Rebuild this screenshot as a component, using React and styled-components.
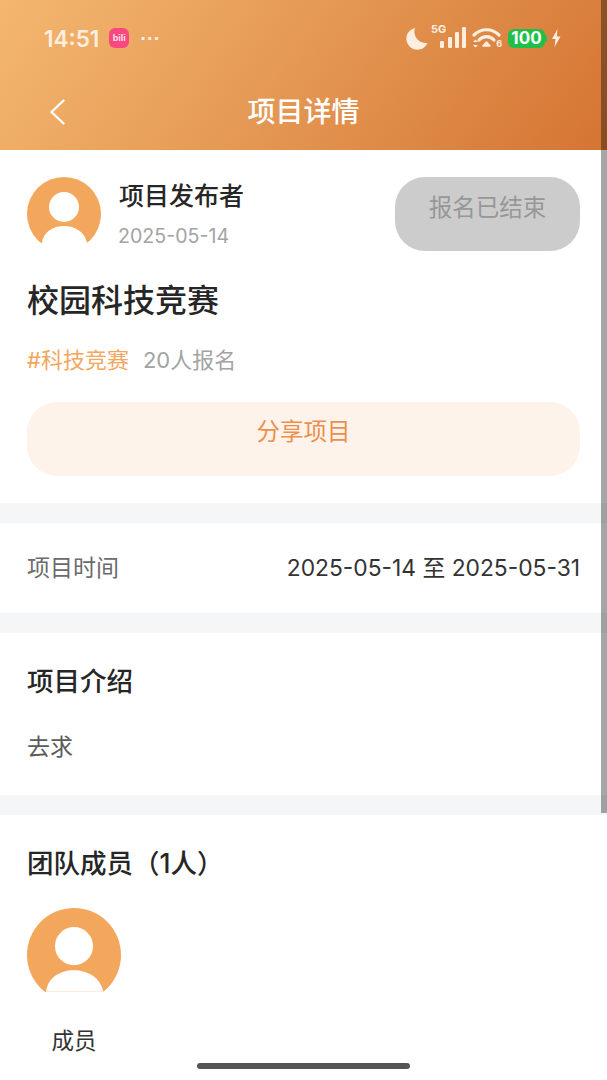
import React from 'react'
import styled, { createGlobalStyle } from 'styled-components'

const FONT = `"Inter", "Noto Sans CJK SC", "Noto Sans", sans-serif`

const GlobalStyle = createGlobalStyle`
  html, body { margin: 0; padding: 0; background: #fff; }
  body { font-family: ${FONT}; overflow: hidden; }
`

const Avatar = ({ size }) => (
  <AvatarSvg width={size} height={size} viewBox="0 0 74 74">
    <circle cx="37" cy="37" r="37" fill="#f3a75c" />
    <circle cx="37" cy="30" r="15" fill="#fff" />
    <path d="M15 66 C16 55 26 49 37 49 C48 49 58 55 60 66 Z" fill="#fff" />
    <rect x="0" y="66" width="74" height="8" fill="#fff" />
  </AvatarSvg>
)

const SignalIcon = () => (
  <svg width="27" height="21" viewBox="0 0 27 21">
    <rect x="1" y="14" width="4" height="7" rx="1" fill="#fdeee0" />
    <rect x="9" y="10" width="4" height="11" rx="1" fill="#fdeee0" />
    <rect x="16" y="5" width="4" height="16" rx="1" fill="#fdeee0" />
    <rect x="23" y="0" width="4" height="21" rx="1" fill="#fdeee0" />
  </svg>
)

const WifiIcon = () => (
  <WifiBox>
    <svg width="29" height="22" viewBox="0 0 29 22" fill="none" stroke="#fdeee0" strokeLinecap="round">
      <path d="M2 8 C9 1 20 1 27 8" strokeWidth="3.2" />
      <path d="M7 13 C11 8.5 18 8.5 22 13" strokeWidth="3.2" />
      <path d="M11 19 L14.5 15 L18 19 Z" fill="#fdeee0" strokeWidth="1.6" strokeLinejoin="round" />
      <path d="M1 15 L3.5 12.5 L6 15 Z M1 18 L3.5 20.5 L6 18 Z" fill="#fdeee0" stroke="none" />
    </svg>
    <WifiLabel>6</WifiLabel>
  </WifiBox>
)

const App = () => {
  return (
    <Page>
      <GlobalStyle />
      <Header>
        <StatusBar>
          <StatusLeft>
            <Clock>14:51</Clock>
            <AppBadge>bili</AppBadge>
            <Dots>···</Dots>
          </StatusLeft>
          <StatusRight>
            <svg width="22" height="23" viewBox="0 0 22 23">
              <path d="M9 1 A11 11 0 1 0 21.5 16 A11.5 11.5 0 0 1 9 1 Z" fill="#fdeee0" />
            </svg>
            <NetworkGroup>
              <NetworkLabel>5G</NetworkLabel>
              <SignalIcon />
            </NetworkGroup>
            <WifiIcon />
            <Battery>100</Battery>
            <BoltBox>
              <svg width="10" height="18" viewBox="0 0 10 18">
                <path d="M6.5 0 L1 10 L4.5 10 L3.5 18 L9.5 7.5 L5.8 7.5 Z" fill="#fdeee0" />
              </svg>
            </BoltBox>
          </StatusRight>
        </StatusBar>
        <NavBar>
          <BackButton>
            <svg width="16" height="26" viewBox="0 0 16 26" fill="none" stroke="#fff" strokeWidth="2.4" strokeLinecap="round" strokeLinejoin="round">
              <path d="M14.5 1.5 L2.5 13 L14.5 24.5" />
            </svg>
          </BackButton>
          <NavTitle>项目详情</NavTitle>
        </NavBar>
      </Header>

      <TopCard>
        <PublisherRow>
          <Avatar size={74} />
          <PublisherInfo>
            <PublisherName>项目发布者</PublisherName>
            <PublishDate>2025-05-14</PublishDate>
          </PublisherInfo>
          <ClosedButton>报名已结束</ClosedButton>
        </PublisherRow>
        <ProjectTitle>校园科技竞赛</ProjectTitle>
        <TagRow>
          <Tag>#科技竞赛</Tag>
          <Signups>20人报名</Signups>
        </TagRow>
        <ShareButton>分享项目</ShareButton>
      </TopCard>

      <TimeRow>
        <TimeLabel>项目时间</TimeLabel>
        <TimeValue>2025-05-14 至 2025-05-31</TimeValue>
      </TimeRow>

      <IntroSection>
        <SectionTitle>项目介绍</SectionTitle>
        <IntroText>去求</IntroText>
      </IntroSection>

      <TeamSection>
        <SectionTitle>团队成员（1人）</SectionTitle>
        <Member>
          <Avatar size={94} />
          <MemberName>成员</MemberName>
        </Member>
      </TeamSection>

      <ScrollThumb />
      <HomeIndicator />
    </Page>
  )
}

export default App

const Page = styled.div`
  position: relative;
  width: 607px;
  height: 1080px;
  overflow: hidden;
  background: #f5f6f7;
`

const Header = styled.div`
  height: 150px;
  display: flex;
  flex-direction: column;
  background: linear-gradient(125deg, #f4b76f 0%, #e59a55 45%, #d57433 100%);
`

const StatusBar = styled.div`
  height: 76px;
  display: flex;
  align-items: center;
  justify-content: space-between;
  padding: 0 46px 0 44px;
`

const StatusLeft = styled.div`
  display: flex;
  align-items: center;
`

const Clock = styled.span`
  font-size: 22.5px;
  font-weight: 600;
  color: #fdeee0;
`

const AppBadge = styled.span`
  width: 20px;
  height: 20px;
  margin-left: 10px;
  border-radius: 6px;
  background: #f9487f;
  color: #ffe3ec;
  font-family: "Liberation Sans", sans-serif;
  font-size: 9px;
  font-weight: 700;
  line-height: 20px;
  text-align: center;
`

const Dots = styled.span`
  margin-left: 11px;
  font-family: "Liberation Sans", sans-serif;
  font-size: 20px;
  line-height: 20px;
  font-weight: 700;
  color: #fdeee0;
`

const StatusRight = styled.div`
  display: flex;
  align-items: center;
`

const NetworkGroup = styled.div`
  position: relative;
  width: 36px;
  height: 22px;
  margin-left: 2px;
  display: flex;
  justify-content: flex-end;
`

const NetworkLabel = styled.span`
  position: absolute;
  left: 1px;
  top: -5px;
  font-size: 11px;
  font-weight: 700;
  color: #fdeee0;
`

const WifiBox = styled.div`
  position: relative;
  width: 30px;
  height: 22px;
  margin-left: 6px;
  display: flex;
`

const WifiLabel = styled.span`
  position: absolute;
  right: 0;
  bottom: 0;
  font-size: 9px;
  line-height: 10px;
  font-weight: 700;
  color: #fdeee0;
`

const Battery = styled.span`
  position: relative;
  width: 37px;
  height: 19px;
  margin-left: 6px;
  border-radius: 6px;
  background: #1fc04a;
  color: #fff;
  font-size: 17px;
  font-weight: 700;
  line-height: 19px;
  text-align: center;

  &::after {
    content: "";
    position: absolute;
    right: -2px;
    top: 6px;
    width: 2px;
    height: 7px;
    border-radius: 0 2px 2px 0;
    background: #1fc04a;
  }
`

const BoltBox = styled.div`
  margin-left: 6px;
  display: flex;
`

const NavBar = styled.div`
  position: relative;
  flex: 1;
  display: flex;
  align-items: center;
  justify-content: center;
  padding-bottom: 2px;
`

const BackButton = styled.div`
  position: absolute;
  left: 49px;
  top: 23px;
  display: flex;
`

const NavTitle = styled.div`
  font-size: 28px;
  font-weight: 500;
  line-height: 40px;
  color: #fff;
`

const TopCard = styled.div`
  height: 353px;
  box-sizing: border-box;
  padding: 27px 27px 0;
  background: #fff;
`

const PublisherRow = styled.div`
  display: flex;
  align-items: flex-start;
`

const AvatarSvg = styled.svg`
  display: block;
  flex-shrink: 0;
`

const PublisherInfo = styled.div`
  flex: 1;
  margin-left: 17px;
`

const PublisherName = styled.div`
  padding-left: 1px;
  font-size: 25px;
  font-weight: 500;
  line-height: 38px;
  color: #262626;
`

const PublishDate = styled.div`
  margin-top: 6px;
  font-size: 19.6px;
  line-height: 30px;
  color: #a3a3a3;
`

const ClosedButton = styled.div`
  width: 185px;
  height: 74px;
  box-sizing: border-box;
  padding-top: 12px;
  border-radius: 30px;
  background: #cccccc;
  color: #979797;
  font-size: 23.5px;
  line-height: 38px;
  text-align: center;
`

const ProjectTitle = styled.div`
  margin-top: 28px;
  font-size: 32px;
  font-weight: 500;
  line-height: 44px;
  color: #262626;
`

const TagRow = styled.div`
  display: flex;
  gap: 14px;
  margin-top: 20px;
  font-size: 22px;
  line-height: 34px;
`

const Tag = styled.span`
  color: #f3a75c;
`

const Signups = styled.span`
  color: #a3a3a3;
`

const ShareButton = styled.div`
  height: 74px;
  box-sizing: border-box;
  margin-top: 25px;
  padding-top: 11px;
  border-radius: 30px;
  background: #fef3ea;
  color: #ec8f4d;
  font-size: 23.5px;
  line-height: 38px;
  text-align: center;
`

const TimeRow = styled.div`
  height: 90px;
  box-sizing: border-box;
  margin-top: 20px;
  padding: 0 27px 4px;
  display: flex;
  align-items: center;
  justify-content: space-between;
  background: #fff;
  font-size: 23px;
`

const TimeLabel = styled.span`
  color: #6b6b6b;
`

const TimeValue = styled.span`
  color: #333;
  font-size: 22.8px;
`

const IntroSection = styled.div`
  height: 162px;
  box-sizing: border-box;
  margin-top: 20px;
  padding: 28px 27px 0;
  background: #fff;
`

const SectionTitle = styled.div`
  font-size: 26.5px;
  font-weight: 500;
  line-height: 40px;
  color: #262626;
`

const IntroText = styled.div`
  margin-top: 29px;
  font-size: 23px;
  line-height: 34px;
  color: #5c5c5c;
`

const TeamSection = styled.div`
  height: 265px;
  box-sizing: border-box;
  margin-top: 20px;
  padding: 28px 27px 0;
  background: #fff;
`

const Member = styled.div`
  width: 94px;
  margin-top: 25px;
  display: flex;
  flex-direction: column;
  align-items: center;
`

const MemberName = styled.div`
  margin-top: 22px;
  font-size: 22.5px;
  line-height: 34px;
  color: #333;
`

const ScrollThumb = styled.div`
  position: absolute;
  top: 0;
  right: 0;
  width: 6px;
  height: 813px;
  background: rgba(0, 0, 0, 0.35);
`

const HomeIndicator = styled.div`
  position: absolute;
  left: 197px;
  bottom: 11px;
  width: 213px;
  height: 6px;
  border-radius: 3px;
  background: #555;
`
